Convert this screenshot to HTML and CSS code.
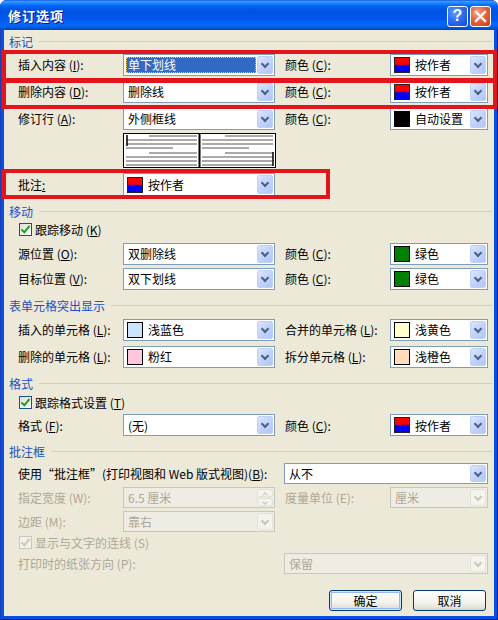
FILE: index.html
```html
<!DOCTYPE html>
<html lang="zh-CN">
<head>
<meta charset="utf-8">
<title>修订选项</title>
<link rel="stylesheet" href="styles.css">
</head>
<body>
<div class="window">
  <div class="titlebar">
    <span class="title">修订选项</span>
    <div class="tb-buttons">
      <span class="tb-btn help">?</span>
      <span class="tb-btn close"><svg width="13" height="13" viewBox="0 0 13 13"><path d="M2 2 L11 11 M11 2 L2 11" stroke="#fff" stroke-width="2.4" stroke-linecap="square"/></svg></span>
    </div>
  </div>

  <div class="client">
    <div class="sec mt1"><span>标记</span></div>
    <div class="row h27">
      <span class="lab">插入内容 (<u>I</u>):</span>
      <div class="combo w152"><span class="val sel">单下划线</span><span class="dd"></span></div>
      <span class="lab2">颜色 (<u>C</u>):</span>
      <div class="combo w98"><span class="sw rb"></span><span class="val">按作者</span><span class="dd"></span></div>
    </div>
    <div class="row h27">
      <span class="lab">删除内容 (<u>D</u>):</span>
      <div class="combo w152"><span class="val">删除线</span><span class="dd"></span></div>
      <span class="lab2">颜色 (<u>C</u>):</span>
      <div class="combo w98"><span class="sw rb"></span><span class="val">按作者</span><span class="dd"></span></div>
    </div>
    <div class="row h27">
      <span class="lab">修订行 (<u>A</u>):</span>
      <div class="combo w152"><span class="val">外侧框线</span><span class="dd"></span></div>
      <span class="lab2">颜色 (<u>C</u>):</span>
      <div class="combo w98"><span class="sw black"></span><span class="val">自动设置</span><span class="dd"></span></div>
    </div>
    <div class="preview-row">
      <svg class="preview" width="153" height="35" viewBox="0 0 153 35">
        <rect x="0.5" y="0.5" width="152" height="34" fill="#fff" stroke="#000"/>
        <line x1="76.5" y1="0" x2="76.5" y2="35" stroke="#000" stroke-width="2"/>
        <g stroke="#aaa" stroke-width="2">
          <line x1="26" y1="3" x2="74" y2="3"/>
          <line x1="3" y1="7" x2="74" y2="7"/>
          <line x1="3" y1="11" x2="74" y2="11"/>
          <line x1="3" y1="15" x2="50" y2="15"/>
          <line x1="26" y1="20" x2="74" y2="20"/>
          <line x1="3" y1="24" x2="74" y2="24"/>
          <line x1="3" y1="28" x2="74" y2="28"/>
          <line x1="3" y1="32" x2="74" y2="32"/>
          <line x1="102" y1="3" x2="150" y2="3"/>
          <line x1="79" y1="7" x2="150" y2="7"/>
          <line x1="79" y1="11" x2="150" y2="11"/>
          <line x1="79" y1="15" x2="126" y2="15"/>
          <line x1="102" y1="20" x2="150" y2="20"/>
          <line x1="79" y1="24" x2="150" y2="24"/>
          <line x1="79" y1="28" x2="150" y2="28"/>
          <line x1="79" y1="32" x2="150" y2="32"/>
        </g>
        <line x1="4" y1="2" x2="4" y2="13" stroke="#000" stroke-width="1.5"/>
        <line x1="150" y1="19" x2="150" y2="33" stroke="#000" stroke-width="1.5"/>
      </svg>
    </div>
    <div class="row h27">
      <span class="lab">批注<u>:</u></span>
      <div class="combo w152 tall"><span class="sw rb"></span><span class="val">按作者</span><span class="dd"></span></div>
    </div>

    <div class="sec mt3"><span>移动</span></div>
    <div class="chk-row">
      <span class="chk on"></span><span>跟踪移动 (<u>K</u>)</span>
    </div>
    <div class="row h25 mt4">
      <span class="lab">源位置 (<u>O</u>):</span>
      <div class="combo w152"><span class="val">双删除线</span><span class="dd"></span></div>
      <span class="lab2">颜色 (<u>C</u>):</span>
      <div class="combo w98"><span class="sw green"></span><span class="val">绿色</span><span class="dd"></span></div>
    </div>
    <div class="row h25">
      <span class="lab">目标位置 (<u>V</u>):</span>
      <div class="combo w152"><span class="val">双下划线</span><span class="dd"></span></div>
      <span class="lab2">颜色 (<u>C</u>):</span>
      <div class="combo w98"><span class="sw green"></span><span class="val">绿色</span><span class="dd"></span></div>
    </div>

    <div class="sec mt4"><span>表单元格突出显示</span></div>
    <div class="row h27 mt1">
      <span class="lab">插入的单元格 (<u>L</u>):</span>
      <div class="combo w152"><span class="sw lblue"></span><span class="val">浅蓝色</span><span class="dd"></span></div>
      <span class="lab2">合并的单元格 (<u>L</u>):</span>
      <div class="combo w98"><span class="sw lyellow"></span><span class="val">浅黄色</span><span class="dd"></span></div>
    </div>
    <div class="row h27">
      <span class="lab">删除的单元格 (<u>L</u>):</span>
      <div class="combo w152"><span class="sw pink"></span><span class="val">粉红</span><span class="dd"></span></div>
      <span class="lab2">拆分单元格 (<u>L</u>):</span>
      <div class="combo w98"><span class="sw lorange"></span><span class="val">浅橙色</span><span class="dd"></span></div>
    </div>

    <div class="sec mt3"><span>格式</span></div>
    <div class="chk-row mt1">
      <span class="chk on"></span><span>跟踪格式设置 (<u>T</u>)</span>
    </div>
    <div class="row h26 mt2">
      <span class="lab">格式 (<u>F</u>):</span>
      <div class="combo w152"><span class="val">(无)</span><span class="dd"></span></div>
      <span class="lab2">颜色 (<u>C</u>):</span>
      <div class="combo w98"><span class="sw rb"></span><span class="val">按作者</span><span class="dd"></span></div>
    </div>

    <div class="sec mt3"><span>批注框</span></div>
    <div class="row h22 mt1">
      <span class="lab wide">使用“批注框”(打印视图和 Web 版式视图)(<u>B</u>):</span>
      <div class="combo w204 short"><span class="val">从不</span><span class="dd"></span></div>
    </div>
    <div class="row h23 mt2 off">
      <span class="lab">指定宽度 (W):</span>
      <div class="combo w152 short dis"><span class="val">6.5 厘米</span><span class="spin"><span class="up"></span><span class="down"></span></span></div>
      <span class="lab2">度量单位 (E):</span>
      <div class="combo w98 short dis"><span class="val">厘米</span><span class="dd"></span></div>
    </div>
    <div class="row h23 mt1 off">
      <span class="lab">边距 (M):</span>
      <div class="combo w152 short dis"><span class="val">靠右</span><span class="dd"></span></div>
    </div>
    <div class="chk-row mt1 off">
      <span class="chk on dis"></span><span>显示与文字的连线 (S)</span>
    </div>
    <div class="row h22 mt2 off">
      <span class="lab wide">打印时的纸张方向 (P):</span>
      <div class="combo w204 short dis"><span class="val">保留</span><span class="dd"></span></div>
    </div>

    <div class="buttons">
      <span class="btn default">确定</span>
      <span class="btn">取消</span>
    </div>
  </div>

  <div class="mark m1"></div>
  <div class="mark m2"></div>
  <div class="mark m3"></div>
</div>
</body>
</html>
```

FILE: styles.css
```css
* { box-sizing: border-box; }

html, body {
  margin: 0;
  padding: 0;
  background: #fff;
}

body {
  font-family: "Noto Sans CJK SC", "Liberation Sans", sans-serif;
  font-size: 12px;
  color: #000;
}

.window {
  position: relative;
  width: 498px;
  height: 620px;
  border-radius: 7px 7px 0 0;
  background: #0550e2;
  display: flex;
  flex-direction: column;
  overflow: hidden;
  box-shadow: inset 1px 0 #1b3fb8, inset -1px 0 #001ea0, inset 0 -1px #001ea0;
}

/* ---------- title bar ---------- */
.titlebar {
  height: 30px;
  flex: none;
  display: flex;
  align-items: center;
  justify-content: space-between;
  padding: 0 7px 0 8px;
  background: linear-gradient(to bottom,
    #0a5ce8 0%, #3d95ff 5%, #2a8aff 9%, #137cff 13%, #036ffc 17%,
    #0262ee 22%, #0057e5 30%, #0054e3 38%, #0055eb 60%, #005bf5 70%,
    #026afe 80%, #0062ef 88%, #0052d6 94%, #0046c0 100%);
}

.title {
  color: #fff;
  font-weight: bold;
  font-size: 13px;
  letter-spacing: 1px;
  text-shadow: 1px 1px 0 #0a1a8a;
  padding-top: 1px;
}

.tb-buttons {
  display: flex;
  gap: 2px;
  padding-top: 2px;
}

.tb-btn {
  width: 21px;
  height: 21px;
  border: 1px solid #fff;
  border-radius: 3px;
  display: flex;
  align-items: center;
  justify-content: center;
  color: #fff;
  font-family: "Liberation Sans", sans-serif;
  font-weight: bold;
  font-size: 16px;
  line-height: 1;
}

.help {
  background: radial-gradient(circle at 35% 30%, #5c9bff 0%, #2e6ff2 45%, #1346d8 100%);
}

.close {
  background: radial-gradient(circle at 35% 30%, #f5a488 0%, #e3643d 45%, #c8401d 100%);
}

/* ---------- client area ---------- */
.client {
  flex: 1;
  margin: 0 4px 4px 4px;
  background: #ece9d8;
  padding: 0 6px 0 0;
  display: flex;
  flex-direction: column;
}

.sec {
  height: 20px;
  display: flex;
  align-items: center;
  padding-left: 5px;
  margin-right: -4px;
  color: #1c4fc4;
}

.sec::after {
  content: "";
  flex: 1;
  height: 1px;
  background: #d0d0bf;
  margin-left: 6px;
}

.row {
  display: flex;
  align-items: center;
  flex: none;
}

.lab {
  width: 119px;
  padding-left: 14px;
  white-space: nowrap;
  flex: none;
}

.lab.wide {
  width: 280px;
}

.lab2 {
  width: 105px;
  margin-left: 10px;
  white-space: nowrap;
  flex: none;
}

u {
  text-decoration: underline;
  text-underline-offset: 1px;
}

/* heights / margins */
.h22 { height: 22px; }
.h23 { height: 23px; }
.h25 { height: 25px; }
.h26 { height: 26px; }
.h27 { height: 27px; }
.mt1 { margin-top: 1px; }
.mt2 { margin-top: 2px; }
.mt3 { margin-top: 3px; }
.mt4 { margin-top: 4px; }

/* ---------- combo boxes ---------- */
.combo {
  height: 22px;
  border: 1px solid #7f9db9;
  background: #fff;
  padding: 1px;
  display: flex;
  align-items: stretch;
  flex: none;
}

.combo.tall { height: 23px; }
.combo.short { height: 21px; }

.w152 { width: 152px; }
.w98 { width: 98px; }
.w204 { width: 204px; }

.val {
  flex: 1;
  display: flex;
  align-items: center;
  padding-left: 3px;
  white-space: nowrap;
  overflow: hidden;
}

.val.sel {
  background: #316ac5;
  color: #fff;
  outline: 1px dotted #f0c060;
  outline-offset: -1px;
  margin: 1px 1px 1px 1px;
  padding-left: 2px;
}

.dd {
  width: 16px;
  flex: none;
  position: relative;
  border: 1px solid #bfd0f7;
  border-radius: 2px;
  background: linear-gradient(135deg, #dbe6fe 0%, #c2d3fb 50%, #b2c6f4 100%);
}

.dd::after {
  content: "";
  position: absolute;
  left: 4px;
  top: 4px;
  width: 4px;
  height: 4px;
  border-right: 2px solid #4d6185;
  border-bottom: 2px solid #4d6185;
  transform: rotate(45deg);
}

/* swatches */
.sw {
  width: 16px;
  height: 16px;
  flex: none;
  align-self: center;
  margin-left: 2px;
  margin-right: 3px;
  border: 1px solid #000;
}

.sw + .val { padding-left: 2px; }

.rb {
  border: none;
  background: linear-gradient(to bottom, #ff0000 0%, #ff0000 45%, #0000ff 55%, #0000ff 100%);
  box-shadow: inset 0 0 0 1px #222;
}
.black { background: #000; }
.green { background: #008000; }
.lblue { background: #cce4fb; }
.lyellow { background: #ffffcc; }
.pink { background: #ffc6de; }
.lorange { background: #ffdcbc; }

/* preview */
.preview-row {
  padding-left: 119px;
  margin-top: 1px;
  margin-bottom: 3px;
  height: 35px;
  flex: none;
}

.preview { display: block; }

/* checkbox rows */
.chk-row {
  height: 16px;
  display: flex;
  align-items: center;
  padding-left: 15px;
  flex: none;
}

.chk {
  width: 13px;
  height: 13px;
  border: 1px solid #1c5180;
  background: linear-gradient(135deg, #dcdcd7 0%, #fff 100%);
  margin-right: 3px;
  position: relative;
  flex: none;
}

.chk.on::after {
  content: "";
  position: absolute;
  left: 3px;
  top: 0px;
  width: 3px;
  height: 7px;
  border-right: 2px solid #21a121;
  border-bottom: 2px solid #21a121;
  transform: rotate(40deg);
}

/* disabled */
.off { color: #aca899; }

.combo.dis {
  border-color: #c9c7ba;
  background: #efede3;
}

.combo.dis .dd {
  border-color: #e4e2d6;
  background: #f4f3ee;
}

.combo.dis .dd::after {
  border-color: #c9c7ba;
}

.chk.dis {
  border-color: #cac8bb;
  background: #f2f1ea;
}

.chk.dis.on::after {
  border-color: #cac8bb;
}

.spin {
  width: 16px;
  flex: none;
  display: flex;
  flex-direction: column;
  gap: 1px;
}

.spin span {
  flex: 1;
  position: relative;
  border: 1px solid #e4e2d6;
  border-radius: 2px;
  background: #f4f3ee;
}

.spin span::after {
  content: "";
  position: absolute;
  left: 5px;
  width: 3px;
  height: 3px;
  border-right: 1px solid #c9c7ba;
  border-bottom: 1px solid #c9c7ba;
}

.spin .up::after { top: 3px; transform: rotate(-135deg); }
.spin .down::after { top: 1px; transform: rotate(45deg); }

/* buttons */
.buttons {
  margin-top: 16px;
  display: flex;
  justify-content: flex-end;
  gap: 11px;
  padding-right: 2px;
}

.btn {
  width: 73px;
  height: 21px;
  border: 1px solid #003c74;
  border-radius: 3px;
  background: linear-gradient(to bottom, #ffffff 0%, #f4f3ee 60%, #e3e0d4 90%, #d6d0c5 100%);
  display: flex;
  align-items: center;
  justify-content: center;
}

.btn.default {
  box-shadow: inset 0 0 0 1px #cee7ff, inset 0 0 0 2px #98b8ea;
}

/* red annotation frames */
.mark {
  position: absolute;
  border: 4px solid #e3141b;
  pointer-events: none;
}

.m1 { left: 2px; top: 50px; width: 495px; height: 32px; }
.m2 { left: 2px; top: 79px; width: 495px; height: 30px; }
.m3 { left: 2px; top: 169px; width: 328px; height: 30px; }
```
